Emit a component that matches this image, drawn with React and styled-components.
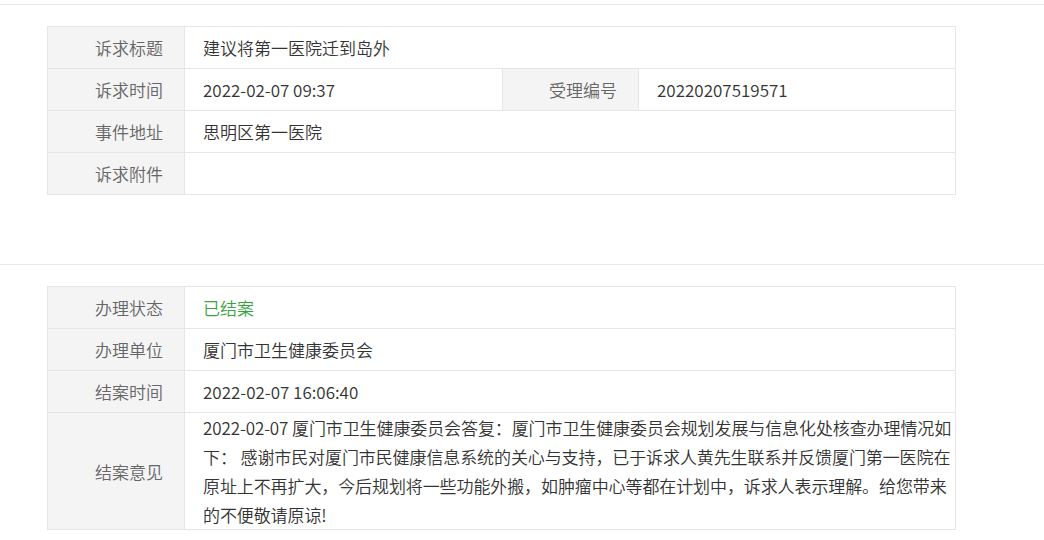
import React from 'react';
import styled, { createGlobalStyle } from 'styled-components';

const GlobalStyle = createGlobalStyle`
  html, body {
    margin: 0;
    padding: 0;
    background: #fff;
  }
  body {
    font-family: "Noto Sans CJK SC", "Noto Sans", sans-serif;
    font-size: 17px;
    font-weight: 350;
    color: #333;
  }
`;

const Page = styled.div`
  padding-top: 4px;
`;

const Section = styled.section`
  border-top: 1px solid #e9e9e9;
  padding: 21px 0 ${(p) => (p.last ? '10px' : '69px')} 47px;
`;

const Table = styled.div`
  width: 909px;
  box-sizing: border-box;
  border: 1px solid #e6e6e6;
  border-bottom: none;
`;

const Row = styled.div`
  display: grid;
  grid-template-columns: ${(p) => (p.split ? '137px 318px 136px 316px' : '137px 1fr')};
  min-height: 41px;
  border-bottom: 1px solid #e6e6e6;
`;

const Label = styled.div`
  display: flex;
  align-items: center;
  justify-content: flex-end;
  padding-right: 21px;
  background: #f4f4f4;
  border-right: 1px solid #e6e6e6;
  color: #666;
  white-space: nowrap;
`;

const Value = styled.div`
  display: flex;
  align-items: center;
  padding: 0 0 1px 18px;
  color: ${(p) => p.color || '#333'};
  border-right: ${(p) => (p.divided ? '1px solid #e6e6e6' : 'none')};
  white-space: nowrap;
`;

const Opinion = styled.div`
  padding: 0 0 0 18px;
  line-height: 29px;
  color: #333;
  letter-spacing: -0.1px;
`;

const requestRows = [
  { label: '诉求标题', value: '建议将第一医院迁到岛外' },
  {
    label: '诉求时间',
    value: '2022-02-07 09:37',
    extraLabel: '受理编号',
    extraValue: '20220207519571',
  },
  { label: '事件地址', value: '思明区第一医院' },
  { label: '诉求附件', value: '' },
];

const handleRows = [
  { label: '办理状态', value: '已结案', color: '#38a23f' },
  { label: '办理单位', value: '厦门市卫生健康委员会' },
  { label: '结案时间', value: '2022-02-07 16:06:40' },
];

const opinion =
  '2022-02-07 厦门市卫生健康委员会答复：厦门市卫生健康委员会规划发展与信息化处核查办理情况如下： 感谢市民对厦门市民健康信息系统的关心与支持，已于诉求人黄先生联系并反馈厦门第一医院在原址上不再扩大，今后规划将一些功能外搬，如肿瘤中心等都在计划中，诉求人表示理解。给您带来的不便敬请原谅!';

function InfoRow({ row }) {
  if (row.extraLabel) {
    return (
      <Row split>
        <Label>{row.label}</Label>
        <Value divided>{row.value}</Value>
        <Label>{row.extraLabel}</Label>
        <Value>{row.extraValue}</Value>
      </Row>
    );
  }
  return (
    <Row>
      <Label>{row.label}</Label>
      <Value color={row.color}>{row.value}</Value>
    </Row>
  );
}

export default function App() {
  return (
    <Page>
      <GlobalStyle />
      <Section>
        <Table>
          {requestRows.map((row) => (
            <InfoRow key={row.label} row={row} />
          ))}
        </Table>
      </Section>
      <Section last>
        <Table>
          {handleRows.map((row) => (
            <InfoRow key={row.label} row={row} />
          ))}
          <Row>
            <Label>结案意见</Label>
            <Opinion>{opinion}</Opinion>
          </Row>
        </Table>
      </Section>
    </Page>
  );
}
